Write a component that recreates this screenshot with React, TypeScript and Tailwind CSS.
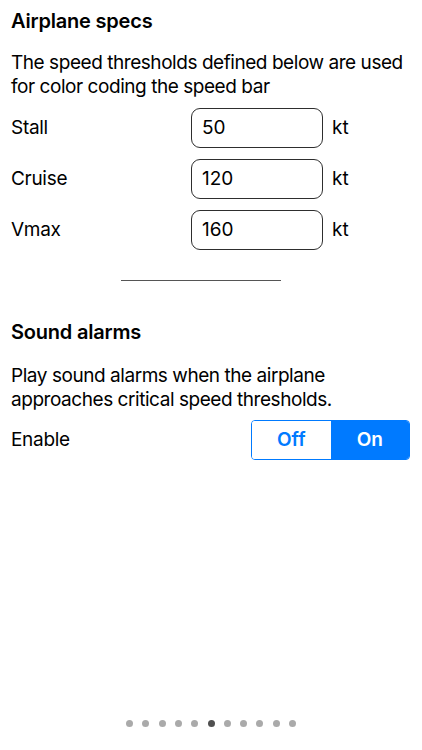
import React, { useState } from 'react';

const font = { fontFamily: 'Inter, "Noto Sans", sans-serif' };

const specs = [
  { label: 'Stall', value: '50' },
  { label: 'Cruise', value: '120' },
  { label: 'Vmax', value: '160' },
];

const App: React.FC = () => {
  const [enabled, setEnabled] = useState(true);
  const dots = Array.from({ length: 11 });

  return (
    <div className="w-[422px] h-[750px] bg-white text-black flex flex-col" style={font}>
      <div className="px-[11px] pt-[9px] flex-1">
        {/* Airplane specs */}
        <h1 className="text-[20px] leading-[24px] font-semibold tracking-[-0.2px]">Airplane specs</h1>
        <p className="mt-[18px] text-[19px] leading-[24px] tracking-[-0.45px]">
          The speed thresholds defined below are used for color coding the speed bar
        </p>

        <div className="mt-[9px] flex flex-col gap-[11px]">
          {specs.map(s => (
            <div key={s.label} className="flex items-center h-[40px]">
              <span className="w-[180px] text-[19px] tracking-[-0.3px]">{s.label}</span>
              <div className="w-[132px] h-[40px] border border-[#2e2e2e] rounded-[9px] flex items-center px-[10px] text-[19px]">
                {s.value}
              </div>
              <span className="ml-[9px] text-[19px]">kt</span>
            </div>
          ))}
        </div>

        <div className="mt-[30px] flex">
          <div className="ml-[110px] w-[160px] h-px bg-[#555]" />
        </div>

        {/* Sound alarms */}
        <h2 className="mt-[39px] text-[20px] leading-[24px] font-semibold tracking-[-0.2px]">Sound alarms</h2>
        <p className="mt-[20px] text-[19px] leading-[24px] tracking-[-0.45px]">
          Play sound alarms when the airplane approaches critical speed thresholds.
        </p>

        <div className="mt-[8px] flex items-center justify-between h-[40px] pr-px">
          <span className="text-[19px] tracking-[-0.3px]">Enable</span>
          <div className="w-[159px] h-[40px] border border-[#007aff] rounded-[4px] flex overflow-hidden">
            <button
              onClick={() => setEnabled(false)}
              className={`flex-1 text-[19px] font-semibold ${!enabled ? 'bg-[#007aff] text-white' : 'bg-white text-[#007aff]'}`}
            >
              Off
            </button>
            <button
              onClick={() => setEnabled(true)}
              className={`flex-1 text-[19px] font-semibold ${enabled ? 'bg-[#007aff] text-white' : 'bg-white text-[#007aff]'}`}
            >
              On
            </button>
          </div>
        </div>
      </div>

      {/* Page dots */}
      <div className="flex justify-center gap-[9.3px] pb-[23px]">
        {dots.map((_, i) => (
          <div key={i} className={`w-[7px] h-[7px] rounded-full ${i === 5 ? 'bg-[#505050]' : 'bg-[#aaaaaa]'}`} />
        ))}
      </div>
    </div>
  );
};

export default App;
